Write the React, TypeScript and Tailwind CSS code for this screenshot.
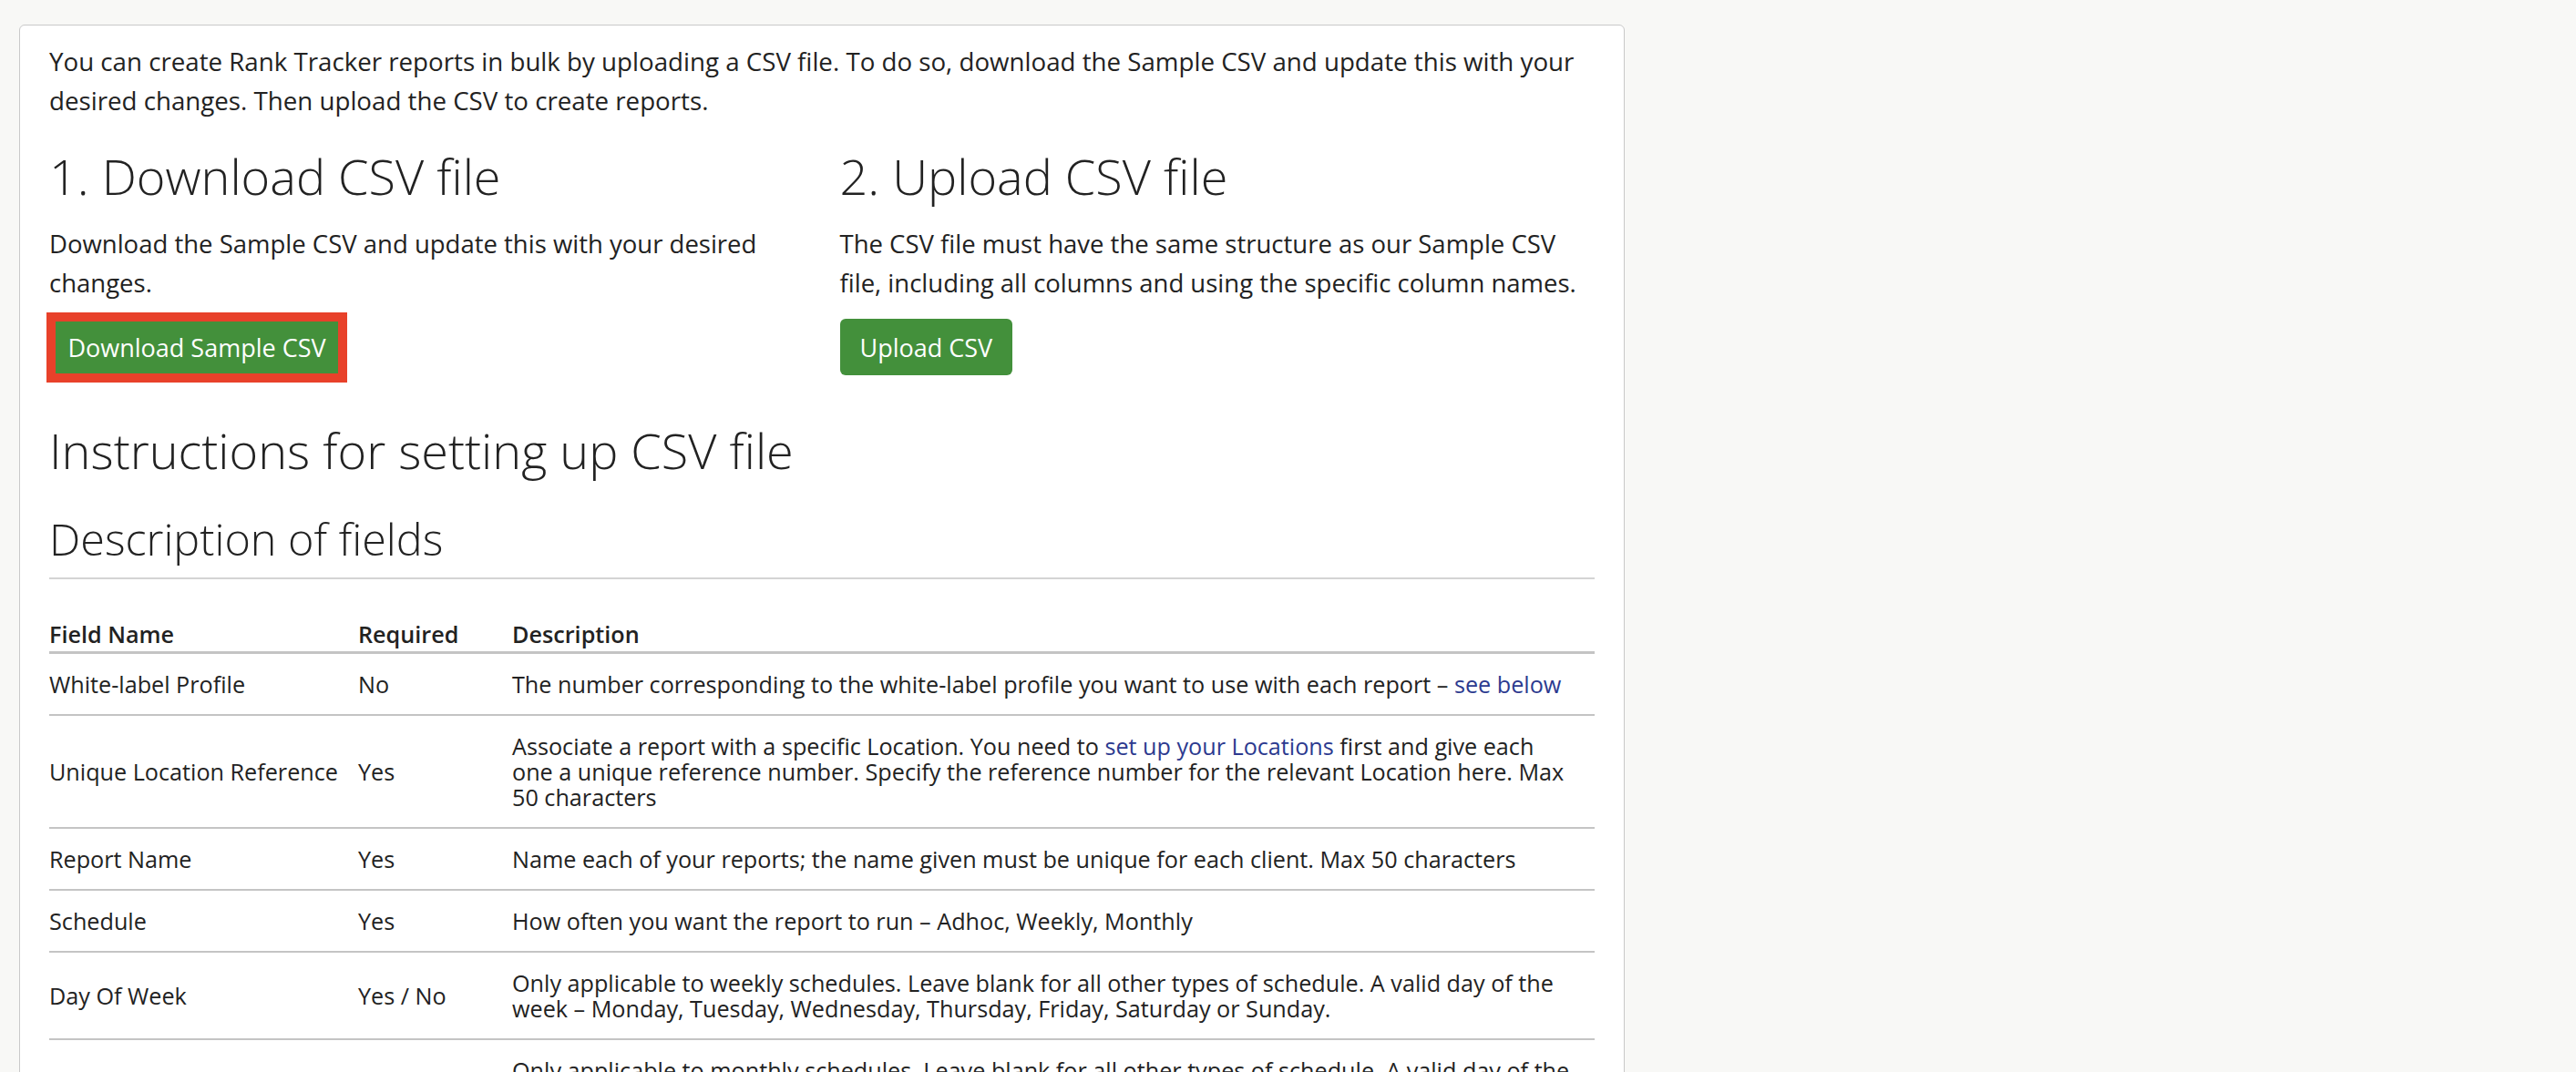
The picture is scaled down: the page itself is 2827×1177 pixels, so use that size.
import React from 'react';

// Bulk create Rank Tracker reports – CSV instructions card

const FONT = { fontFamily: '"Open Sans", "Noto Sans", Arial, sans-serif' };

interface Row {
  field: string;
  required: string;
  description: React.ReactNode;
}

const Link = ({ children }: { children: React.ReactNode }) => (
  <a href="#" className="text-[#2c3a8f] no-underline">
    {children}
  </a>
);

const rows: Row[] = [
  {
    field: 'White-label Profile',
    required: 'No',
    description: (
      <>
        The number corresponding to the white-label profile you want to use with each report –{' '}
        <Link>see below</Link>
      </>
    ),
  },
  {
    field: 'Unique Location Reference',
    required: 'Yes',
    description: (
      <>
        Associate a report with a specific Location. You need to <Link>set up your Locations</Link>{' '}
        first and give each one a unique reference number. Specify the reference number for the
        relevant Location here. Max 50 characters
      </>
    ),
  },
  {
    field: 'Report Name',
    required: 'Yes',
    description:
      'Name each of your reports; the name given must be unique for each client. Max 50 characters',
  },
  {
    field: 'Schedule',
    required: 'Yes',
    description: 'How often you want the report to run – Adhoc, Weekly, Monthly',
  },
  {
    field: 'Day Of Week',
    required: 'Yes / No',
    description:
      'Only applicable to weekly schedules. Leave blank for all other types of schedule. A valid day of the week – Monday, Tuesday, Wednesday, Thursday, Friday, Saturday or Sunday.',
  },
  {
    field: 'Day Of Month',
    required: 'Yes / No',
    description:
      'Only applicable to monthly schedules. Leave blank for all other types of schedule. A valid day of the month – 1 to 28.',
  },
];

export default function App() {
  return (
    <div className="min-h-screen bg-[#f8f8f6] pl-[21px] pt-[27px] text-[#222222]" style={FONT}>
      <div className="w-[1762px] rounded-[6px] border border-[#c9c9c9] bg-white px-[32px] pt-[18px] pb-[40px]">
        {/* Intro */}
        <p className="text-[27.7px] leading-[43px]">
          You can create Rank Tracker reports in bulk by uploading a CSV file. To do so, download the
          Sample CSV and update this with your desired changes. Then upload the CSV to create reports.
        </p>

        {/* Steps */}
        <div className="mt-[31px] grid grid-cols-2 gap-x-[39px]">
          <div>
            <h2 className="text-[54px] font-light leading-[60px]">1. Download CSV file</h2>
            <p className="mt-[23px] text-[27.5px] leading-[43px]">
              Download the Sample CSV and update this with your desired changes.
            </p>
            <div className="mt-[11px] ml-[-3px] inline-block border-[10px] border-[#e8412a]">
              <button className="block h-[57px] w-[310px] bg-[#43903b] text-[27px] leading-[43px] text-white">
                Download Sample CSV
              </button>
            </div>
          </div>
          <div>
            <h2 className="text-[54px] font-light leading-[60px]">2. Upload CSV file</h2>
            <p className="mt-[23px] text-[27.5px] leading-[43px]">
              The CSV file must have the same structure as our Sample CSV file, including all columns
              and using the specific column names.
            </p>
            <button className="mt-[18px] h-[62px] rounded-[6px] bg-[#43903b] px-[22px] text-[27px] leading-[43px] text-white">
              Upload CSV
            </button>
          </div>
        </div>

        <h2 className="mt-[44px] text-[54px] font-light leading-[60px]">
          Instructions for setting up CSV file
        </h2>
        <h3 className="mt-[40px] border-b-2 border-[#d4d4d4] pb-[16px] text-[48.5px] font-light leading-[54px]">
          Description of fields
        </h3>

        {/* Fields table */}
        <table className="mt-[26px] w-full border-collapse text-left text-[25.2px] leading-[28px]">
          <thead>
            <tr className="border-b-[3px] border-[#c4c4c4]">
              <th className="w-[339px] pb-[5px] pt-[20px] align-middle font-semibold">Field Name</th>
              <th className="w-[169px] pb-[5px] pt-[20px] align-middle font-semibold">Required</th>
              <th className="pb-[5px] pt-[20px] align-middle font-semibold">Description</th>
            </tr>
          </thead>
          <tbody>
            {rows.map((r) => (
              <tr key={r.field} className="border-b-2 border-[#c4c4c4]">
                <td className="py-[19px] pr-[8px] align-middle">{r.field}</td>
                <td className="py-[19px] pr-[8px] align-middle">{r.required}</td>
                <td className="py-[19px] pr-[20px] align-middle">{r.description}</td>
              </tr>
            ))}
          </tbody>
        </table>
      </div>
    </div>
  );
}
